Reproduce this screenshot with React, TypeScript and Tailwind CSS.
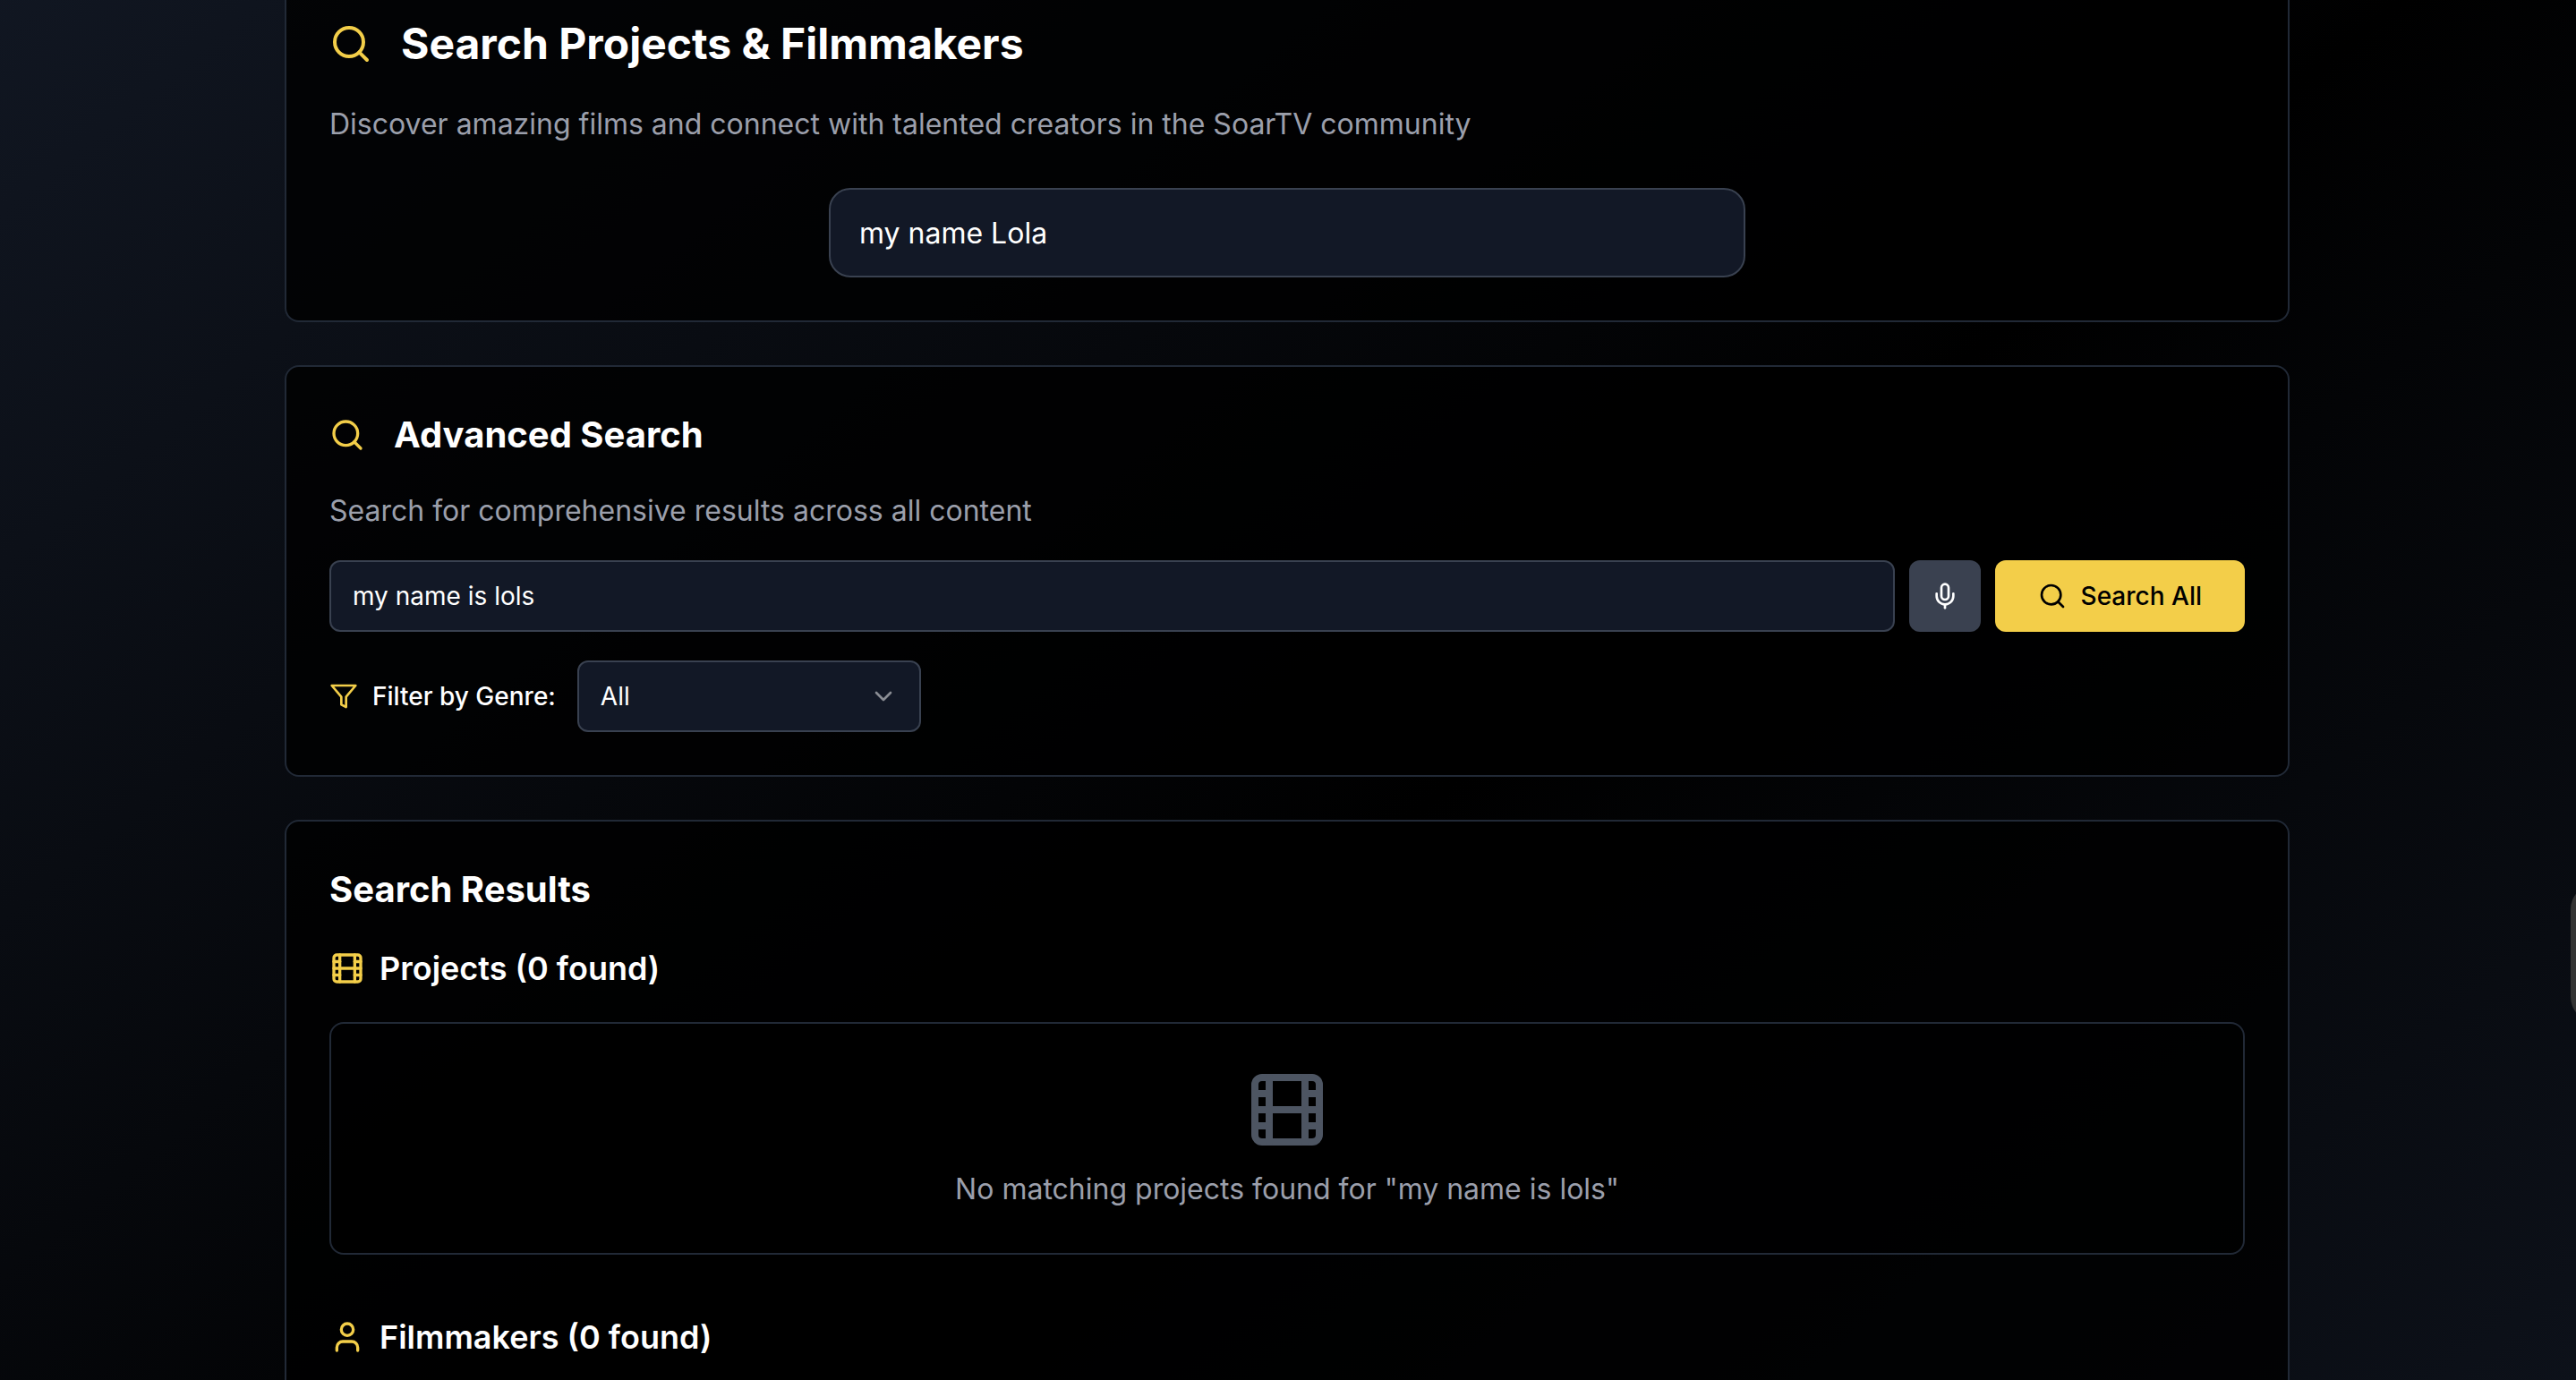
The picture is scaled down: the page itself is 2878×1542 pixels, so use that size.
import React, { useState } from 'react';
import { Search, Mic, Film, User, ChevronDown } from 'lucide-react';

const card = 'border-[#212936] bg-black/80 px-12 pb-12';

function FunnelIcon() {
  return (
    <svg className="size-8 text-[#f3ce49]" viewBox="0 0 24 24" fill="none" stroke="currentColor" strokeWidth="2" strokeLinecap="round" strokeLinejoin="round" aria-hidden="true">
      <polygon points="22 3 2 3 10 12.46 10 19 14 21 14 12.46 22 3" />
    </svg>
  );
}

export default function App() {
  const [quick, setQuick] = useState('my name Lola');
  const [query, setQuery] = useState('my name is lols');
  const [genre, setGenre] = useState('All');

  return (
    <div className="relative h-screen overflow-hidden bg-black bg-linear-to-br/srgb from-[#121824] via-black to-[#121824] bg-[size:100%_2372px] bg-[position:0_-160px] bg-no-repeat pr-0.5 font-[Inter,sans-serif] text-white">
      <main className="mx-auto flex max-w-[2240px] flex-col gap-12">
        <section className={`rounded-b-2xl border-x-2 border-b-2 pt-4 ${card}`}>
          <h1 className="flex items-center gap-8 text-5xl leading-[66px] font-bold">
            <Search className="size-12 text-[#f3ce49]" />
            Search Projects &amp; Filmmakers
          </h1>
          <p className="mt-8 text-[32px] leading-[50px] text-[#9b9fab]">
            Discover amazing films and connect with talented creators in the SoarTV community
          </p>
          <input
            aria-label="Quick search"
            value={quick}
            onChange={(e) => setQuick(e.target.value)}
            className="mx-auto mt-[46px] block h-[100px] w-full max-w-[1024px] rounded-3xl border-2 border-[#394150] bg-[#121826] px-8 text-[32px] outline-none"
          />
        </section>

        <section className={`rounded-2xl border-2 pt-12 ${card}`}>
          <h2 className="flex items-center gap-8 text-[40px] leading-[56px] font-bold">
            <Search className="size-10 text-[#f3ce49]" />
            Advanced Search
          </h2>
          <p className="mt-8 text-[32px] leading-[50px] text-[#9b9fab]">
            Search for comprehensive results across all content
          </p>
          <form className="mt-[30px] flex gap-4" onSubmit={(e) => e.preventDefault()}>
            <input
              aria-label="Search all content"
              value={query}
              onChange={(e) => setQuery(e.target.value)}
              className="h-20 min-w-0 flex-1 rounded-xl border-2 border-[#394150] bg-[#121826] px-6 text-[28px] outline-none"
            />
            <button type="button" aria-label="Voice search" className="flex size-20 items-center justify-center rounded-xl bg-[#3a4150]">
              <Mic className="size-8" />
            </button>
            <button type="submit" className="flex h-20 items-center gap-4 rounded-xl bg-[#f3ce49] px-12 text-[28px] font-medium text-black">
              <Search className="size-8" />
              Search All
            </button>
          </form>
          <div className="mt-8 flex items-center">
            <FunnelIcon />
            <label htmlFor="genre" className="mr-6 ml-4 text-[28px] font-medium">
              Filter by Genre:
            </label>
            <div className="relative w-96">
              <select
                id="genre"
                value={genre}
                onChange={(e) => setGenre(e.target.value)}
                className="h-20 w-full appearance-none rounded-xl border-2 border-[#394150] bg-[#121826] px-6 text-[28px] outline-none"
              >
                <option>All</option>
                <option>Drama</option>
                <option>Comedy</option>
                <option>Documentary</option>
              </select>
              <ChevronDown className="pointer-events-none absolute inset-y-0 right-[26px] my-auto size-8 opacity-50" />
            </div>
          </div>
        </section>

        <section className={`rounded-2xl border-2 pt-12 ${card}`}>
          <h2 className="text-[40px] leading-[56px] font-bold">Search Results</h2>
          <h3 className="mt-8 flex items-center gap-4 text-4xl leading-[56px] font-semibold">
            <Film className="size-10 text-[#f3ce49]" />
            Projects (0 found)
          </h3>
          <div className="mt-8 flex flex-col items-center gap-4 rounded-2xl border-2 border-[#212936] bg-black/50 px-12 pt-12 pb-[46px]">
            <Film className="size-24 text-[#4d5562]" />
            <p className="text-[32px] leading-[50px] text-[#9b9fab]">No matching projects found for "my name is lols"</p>
          </div>
          <h3 className="mt-16 flex items-center gap-4 text-4xl leading-[56px] font-semibold">
            <User className="size-10 text-[#f3ce49]" />
            Filmmakers (0 found)
          </h3>
        </section>
      </main>
      {/* Side handle, mostly tucked behind the window's right edge */}
      <div className="absolute top-[988px] -right-[58px] h-[154px] w-16 rounded-[28px] bg-[#333333]" />
    </div>
  );
}
